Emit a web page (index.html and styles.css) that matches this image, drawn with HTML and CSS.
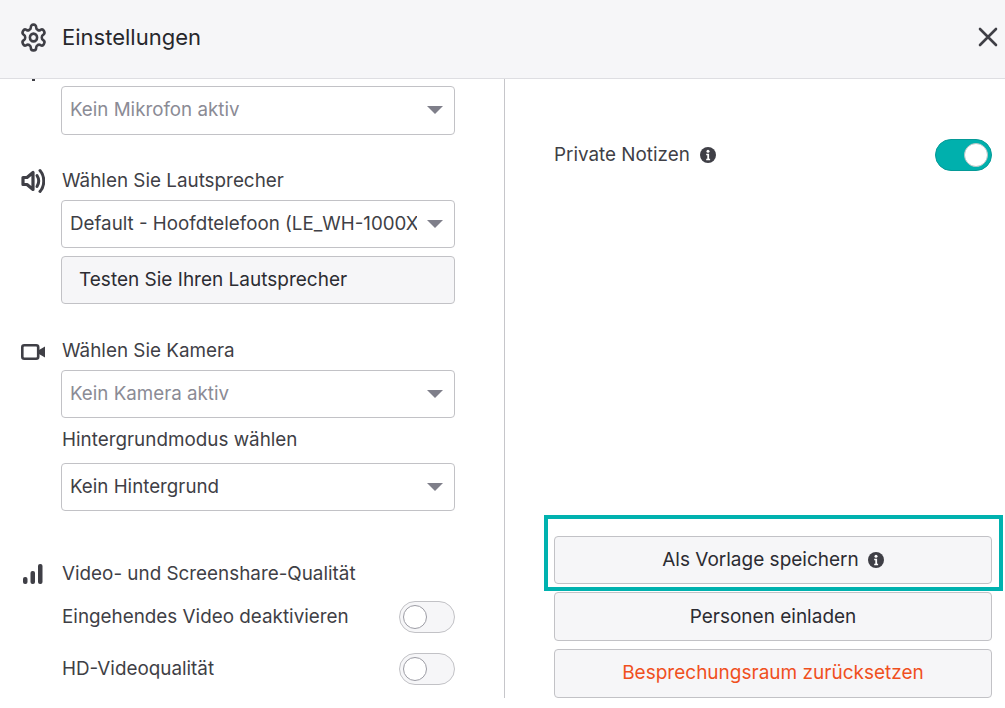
FILE: index.html
```html
<!DOCTYPE html>
<html lang="de">
<head>
<meta charset="utf-8">
<title>Einstellungen</title>
<link rel="stylesheet" href="styles.css">
</head>
<body>
<div class="dialog">
  <header class="header">
    <svg class="gear" viewBox="0 0 24 24" width="29" height="31" preserveAspectRatio="none" fill="none" stroke="#3f3f46" stroke-width="2.1"><path d="M12.22 2h-.44a2 2 0 0 0-2 2v.18a2 2 0 0 1-1 1.73l-.43.25a2 2 0 0 1-2 0l-.15-.08a2 2 0 0 0-2.73.73l-.22.38a2 2 0 0 0 .73 2.73l.15.1a2 2 0 0 1 1 1.72v.51a2 2 0 0 1-1 1.74l-.15.09a2 2 0 0 0-.73 2.73l.22.38a2 2 0 0 0 2.73.73l.15-.08a2 2 0 0 1 2 0l.43.25a2 2 0 0 1 1 1.73V20a2 2 0 0 0 2 2h.44a2 2 0 0 0 2-2v-.18a2 2 0 0 1 1-1.73l.43-.25a2 2 0 0 1 2 0l.15.08a2 2 0 0 0 2.73-.73l.22-.39a2 2 0 0 0-.73-2.73l-.15-.08a2 2 0 0 1-1-1.74v-.5a2 2 0 0 1 1-1.74l.15-.09a2 2 0 0 0 .73-2.73l-.22-.38a2 2 0 0 0-2.73-.73l-.15.08a2 2 0 0 1-2 0l-.43-.25a2 2 0 0 1-1-1.73V4a2 2 0 0 0-2-2z"/><circle cx="12" cy="12" r="3"/></svg>
    <h1 class="title">Einstellungen</h1>
    <svg class="close" viewBox="0 0 20 20" width="20" height="20" fill="none" stroke="#3f3f46" stroke-width="2.6" stroke-linecap="round"><path d="M2 2l16 16M18 2L2 18"/></svg>
  </header>
  <main class="body">
    <section class="left">
      <div class="scroll">
        <div class="mic-stub"></div>
        <div class="select muted tall"><span class="select-text">Kein Mikrofon aktiv</span><i class="arrow"></i></div>

        <div class="row speaker-row">
          <svg class="icon" viewBox="0 0 24 26" width="24" height="26" fill="none" stroke="#3f3f46"><path d="M2 9.500h4l6-5v17l-6-5H2z" stroke-width="3.200" stroke-linejoin="round"/><path d="M16 7.500c2 3.200 2 7.800 0 11" stroke-width="3" stroke-linecap="round"/><path d="M19 2.500c5 5.500 5 15.500 0 21" stroke-width="3" stroke-linecap="round"/></svg>
          <span class="label">Wählen Sie Lautsprecher</span>
        </div>
        <div class="select label-gap"><span class="select-text">Default - Hoofdtelefoon (LE_WH-1000XM4)</span><i class="arrow"></i></div>
        <div class="test-btn">Testen Sie Ihren Lautsprecher</div>

        <div class="row camera-row">
          <svg class="icon camera-icon" viewBox="0 0 24 16" width="24" height="16"><rect x="1.300" y="1.300" width="15.900" height="13.400" rx="2" fill="none" stroke="#3f3f46" stroke-width="2.600"/><path d="M18 6l6-3.500v11L18 10z" fill="#3f3f46"/></svg>
          <span class="label">Wählen Sie Kamera</span>
        </div>
        <div class="select muted camera-select"><span class="select-text">Kein Kamera aktiv</span><i class="arrow"></i></div>
        <div class="sub-label">Hintergrundmodus wählen</div>
        <div class="select"><span class="select-text">Kein Hintergrund</span><i class="arrow"></i></div>

        <div class="row quality-row">
          <svg class="icon" viewBox="0 0 24 22" width="24" height="22" fill="#3f3f46"><rect x="2" y="14" width="4.500" height="7" rx="2"/><rect x="9.500" y="8" width="4.500" height="13" rx="2"/><rect x="17" y="1" width="4.500" height="20" rx="2"/></svg>
          <span class="label">Video- und Screenshare-Qualität</span>
        </div>
        <div class="toggle-row first-toggle"><span class="label">Eingehendes Video deaktivieren</span><span class="toggle"><i class="knob"></i></span></div>
        <div class="toggle-row second-toggle"><span class="label">HD-Videoqualität</span><span class="toggle"><i class="knob"></i></span></div>
      </div>
    </section>
    <section class="right">
      <div class="notes">
        <span class="label notes-label">Private Notizen</span>
        <svg class="info" viewBox="0 0 16 16" width="16" height="16"><circle cx="8" cy="8" r="8" fill="#3f3f46"/><circle cx="8" cy="4.200" r="1.500" fill="#fff"/><path d="M6.200 6.800h2.900v5h1v1.400H6.200v-1.400h1.100V8.200H6.200z" fill="#fff"/></svg>
        <span class="toggle on"><i class="knob"></i></span>
      </div>
      <div class="actions">
        <div class="highlighted">
          <div class="btn">Als Vorlage speichern <svg class="info btn-info" viewBox="0 0 16 16" width="16" height="16"><circle cx="8" cy="8" r="8" fill="#3f3f46"/><circle cx="8" cy="4.200" r="1.500" fill="#fff"/><path d="M6.200 6.800h2.900v5h1v1.400H6.200v-1.400h1.100V8.200H6.200z" fill="#fff"/></svg></div>
        </div>
        <div class="btn middle">Personen einladen</div>
        <div class="btn danger">Besprechungsraum zurücksetzen</div>
      </div>
    </section>
  </main>
</div>
</body>
</html>
```

FILE: styles.css
```css
* { box-sizing: border-box; }
html, body { margin: 0; height: 100%; background: #fff; }
body { font-family: Inter, "Liberation Sans", sans-serif; color: #3f3f46; font-size: 19px; overflow: hidden; }
.dialog { width: 1005px; height: 708px; display: flex; flex-direction: column; }

.header { height: 79px; flex: none; display: flex; align-items: center; background: #f6f6f8; border-bottom: 1px solid #dedee2; padding: 0 7px 4px 19px; }
.gear { flex: none; }
.title { flex: 1; margin: 0 0 0 14px; font-size: 22px; font-weight: 400; color: #27272c; }
.close { flex: none; }

.body { height: 619px; flex: none; display: flex; }
.left { width: 505px; flex: none; border-right: 1px solid #c6c6ca; overflow: hidden; }
.scroll { padding: 7px 49px 0 61px; }
.mic-stub { position: absolute; left: 32px; top: 79px; width: 3px; height: 2px; background: #3f3f46; }

.row { display: flex; align-items: center; position: relative; }
.icon { position: absolute; left: -40px; }
.camera-icon { margin-top: 2px; }
.label { line-height: 22px; white-space: nowrap; font-size: 18.850px; padding-left: 1px; }
.notes-label { padding-left: 0; }

.select { height: 48px; display: flex; align-items: center; border: 1px solid #c2c2c6; border-radius: 4px; padding: 0 11px 2px 8px; background: #fff; color: #3f3f46; font-size: 18.750px; }
.tall { height: 48.500px; }
.select-text { flex: 1; min-width: 0; overflow: hidden; white-space: nowrap; }
.muted { color: #8b8b95; }
.arrow { flex: none; margin: 2px 0 0 10px; width: 0; height: 0; border-left: 8px solid transparent; border-right: 8px solid transparent; border-top: 8px solid #7f7f8a; }

.speaker-row { margin-top: 35.500px; }
.label-gap { margin-top: 8px; }
.test-btn { height: 48px; margin-top: 8px; display: flex; align-items: center; padding: 0 0 2px 17px; border: 1px solid #c2c2c6; border-radius: 4px; background: #f6f6f8; color: #2c2c32; }
.camera-row { margin-top: 36px; }
.camera-select { margin-top: 8px; }
.sub-label { margin-top: 11px; margin-bottom: 12px; line-height: 22px; font-size: 18.850px; padding-left: 1px; }
.quality-row { margin-top: 52px; }
.first-toggle { margin-top: 16px; }
.second-toggle { margin-top: 20px; }

.toggle-row { display: flex; justify-content: space-between; align-items: center; }
.toggle { flex: none; width: 56px; height: 32px; border: 1px solid #c2c2c6; border-radius: 16px; background: #f6f6f8; display: flex; align-items: center; padding-left: 3px; }
.knob { width: 24px; height: 24px; border-radius: 50%; background: #fff; border: 1px solid #9c9ca4; }
.toggle.on { width: 57px; background: #00b0ad; border-color: #059a97; padding-left: 28px; }
.toggle.on .knob { border-color: #b8c4c4; }

.right { flex: 1; display: flex; flex-direction: column; justify-content: space-between; padding: 60px 13px 0 49px; }
.notes { display: flex; align-items: center; height: 32px; }
.info { flex: none; }
.notes .info { margin-left: 10px; }
.notes .toggle { margin-left: auto; }

.actions { display: flex; flex-direction: column; gap: 8px; padding-bottom: 0.300px; }
.highlighted { position: relative; }
.highlighted::after { content: ""; position: absolute; left: -10px; right: -11px; top: -21px; bottom: -7px; border: 4px solid #00b2af; pointer-events: none; }
.btn { height: 48.300px; display: flex; align-items: center; justify-content: center; border: 1px solid #c2c2c6; border-radius: 4px; background: #f6f6f8; color: #2c2c32; padding-bottom: 2px; }
.middle { padding-bottom: 0; }
.btn-info { margin-left: 9px; margin-top: 2px; }
.danger { color: #f0501e; margin-top: 0.700px; }
```
